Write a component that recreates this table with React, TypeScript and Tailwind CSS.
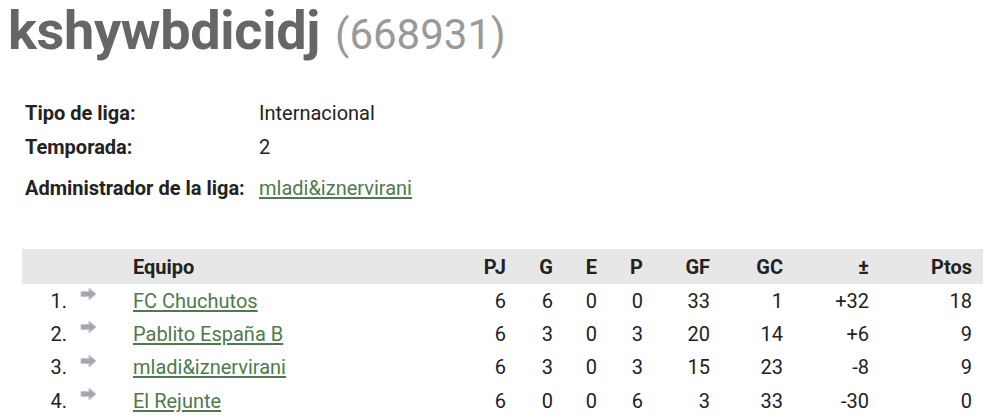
const rows = [
  { pos: 1, team: "FC Chuchutos", pj: 6, g: 6, e: 0, p: 0, gf: 33, gc: 1, diff: "+32", pts: 18 },
  { pos: 2, team: "Pablito España B", pj: 6, g: 3, e: 0, p: 3, gf: 20, gc: 14, diff: "+6", pts: 9 },
  { pos: 3, team: "mladi&iznervirani", pj: 6, g: 3, e: 0, p: 3, gf: 15, gc: 23, diff: "-8", pts: 9 },
  { pos: 4, team: "El Rejunte", pj: 6, g: 0, e: 0, p: 6, gf: 3, gc: 33, diff: "-30", pts: 0 },
];

function TrendArrow() {
  return (
    <svg width="17" height="14" viewBox="0 0 17 14" className="block">
      <path d="M1 4.5h8V1l7 6-7 6V9.5H1z" fill="#a6a6b0" stroke="#c6c6ce" strokeWidth="1" strokeLinejoin="round" />
    </svg>
  );
}

export default function App() {
  return (
    <div className="bg-white text-[#222] font-['Roboto',sans-serif] w-[987px] h-[420px] overflow-hidden">
      <h1 className="pl-[8px] leading-[62px] whitespace-nowrap flex items-baseline">
        <span className="text-[54px] font-bold text-[#666] tracking-[-0.3px]">kshywbdicidj</span>
        <span className="ml-[15px] text-[42px] text-[#999]">(668931)</span>
      </h1>

      <div className="pl-[25px] pt-[30px] text-[20px]">
        <div className="flex h-[34px] items-center">
          <span className="w-[234px] font-bold">Tipo de liga:</span>
          <span>Internacional</span>
        </div>
        <div className="flex h-[34px] items-center">
          <span className="w-[234px] font-bold">Temporada:</span>
          <span>2</span>
        </div>
        <div className="flex h-[44px] items-center pt-[4px]">
          <span className="w-[234px] font-bold">Administrador de la liga:</span>
          <a href="#" className="text-[#4e7a4e] underline underline-offset-2">mladi&iznervirani</a>
        </div>
      </div>

      <table className="ml-[22px] mt-[41px] w-[961px] text-[20px] border-collapse table-fixed">
        <thead>
          <tr className="bg-[#e7e7e7] h-[35px] font-bold">
            <th className="w-[45px]"></th>
            <th className="w-[66px]"></th>
            <th className="w-[333px] text-left">Equipo</th>
            <th className="w-[40px] text-right">PJ</th>
            <th className="w-[47px] text-right">G</th>
            <th className="w-[44px] text-right">E</th>
            <th className="w-[46px] text-right">P</th>
            <th className="w-[67px] text-right">GF</th>
            <th className="w-[73px] text-right">GC</th>
            <th className="w-[86px] text-right">±</th>
            <th className="w-[114px] text-right pr-[11px]">Ptos</th>
          </tr>
        </thead>
        <tbody>
          {rows.map((r) => (
            <tr key={r.pos} className="h-[33.4px]">
              <td className="text-right">{r.pos}.</td>
              <td className="pl-[13px] align-top pt-[3px]">
                <TrendArrow />
              </td>
              <td className="whitespace-nowrap">
                <a href="#" className="text-[#4e7a4e] underline underline-offset-2">{r.team}</a>
              </td>
              <td className="text-right">{r.pj}</td>
              <td className="text-right">{r.g}</td>
              <td className="text-right">{r.e}</td>
              <td className="text-right">{r.p}</td>
              <td className="text-right">{r.gf}</td>
              <td className="text-right">{r.gc}</td>
              <td className="text-right">{r.diff}</td>
              <td className="text-right pr-[11px]">{r.pts}</td>
            </tr>
          ))}
        </tbody>
      </table>
    </div>
  );
}
